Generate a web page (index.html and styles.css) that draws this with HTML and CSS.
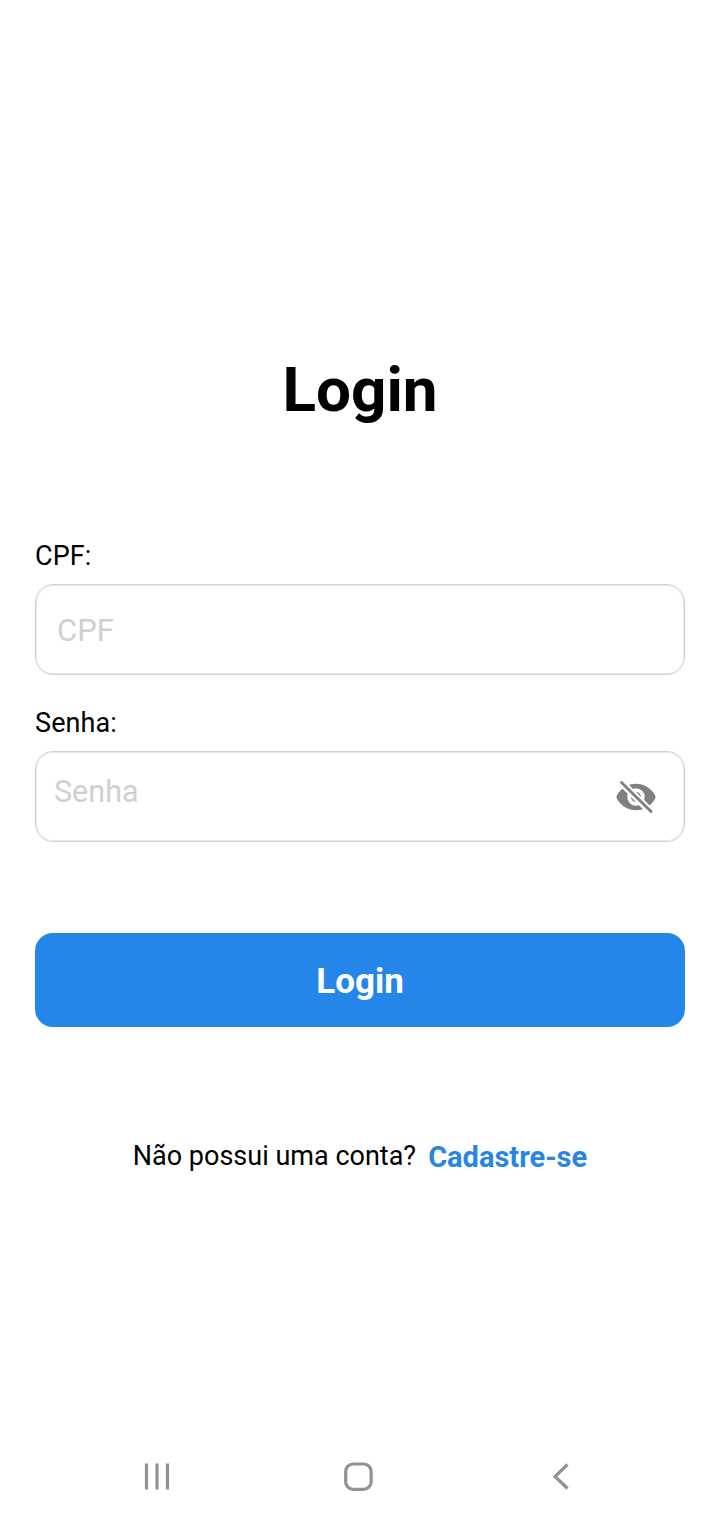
FILE: index.html
```html
<!DOCTYPE html>
<html lang="pt-BR">
<head>
<meta charset="utf-8">
<title>Login</title>
<link rel="stylesheet" href="styles.css">
</head>
<body>
<main class="screen">
  <h1 class="title">Login</h1>
  <form class="form">
    <label class="label" for="cpf">CPF:</label>
    <div class="field field-cpf"><input id="cpf" class="input" type="text" placeholder="CPF"></div>
    <label class="label" for="senha">Senha:</label>
    <div class="field field-senha">
      <input id="senha" class="input" type="password" placeholder="Senha">
      <svg class="eye" viewBox="0 0 40 32" width="40" height="32">
        <path fill="#808080" d="M.8 14.400C5 7 12 2.700 20 2.700S35 7 39.200 14.400Q40 16 39.200 17.600C35 25 28 29.300 20 29.300S5 25 .8 17.600Q0 16 .8 14.400z"/>
        <circle cx="20" cy="16" r="6.900" fill="none" stroke="#fff" stroke-width="3.600"/>
        <path d="M3 -1L37 33" stroke="#fff" stroke-width="7.400"/>
        <path d="M5.500 1.500L35 30.500" stroke="#808080" stroke-width="2.900" stroke-linecap="round"/>
      </svg>
    </div>
    <button class="button" type="button">Login</button>
  </form>
  <p class="signup"><span class="question">Não possui uma conta?</span><a class="link">Cadastre-se</a></p>
  <nav class="navbar">
    <svg class="recent" width="28" height="28" viewBox="0 0 28 28"><path d="M3.500 .5v26M14 .5v26M24.500 .5v26" stroke="#929292" stroke-width="3.200"/></svg>
    <svg class="home" width="30" height="30" viewBox="0 0 30 30"><rect x="2.700" y="2" width="25.400" height="25.400" rx="7.500" fill="none" stroke="#929292" stroke-width="3.200"/></svg>
    <svg class="back" width="18" height="28" viewBox="0 0 18 28"><path d="M15.500 1.500L3 13.500l12.500 12" fill="none" stroke="#929292" stroke-width="3.200"/></svg>
  </nav>
</main>
</body>
</html>
```
FILE: styles.css
```css
* { box-sizing: border-box; }
body { margin: 0; background: #fff; color: #000; font-family: Roboto, sans-serif; }
.screen { width: 720px; height: 1520px; padding: 352px 35px 0; display: flex; flex-direction: column; }
.title { margin: 0; height: 76px; font-size: 62px; line-height: 75px; font-weight: 700; text-align: center; }
.form { margin-top: 112px; display: flex; flex-direction: column; }
.label { height: 32px; margin-bottom: 12px; font-size: 27px; line-height: 32px; letter-spacing: .1px; }
.field { height: 91px; margin-bottom: 32px; border: 1px solid #d2d2d2; box-shadow: inset 0 0 0 1px #e9e9e9; border-radius: 18px; display: flex; align-items: center; }
.field-cpf { padding-left: 21px; }
.field-senha { padding: 0 28px 0 18px; }
.input { flex: 1; min-width: 0; padding: 0; border: 0; outline: 0; background: transparent; font: 400 31px/38px Roboto, sans-serif; }
.input::placeholder { color: #d0d0d0; opacity: 1; }
.field-cpf .input { margin-top: 2px; }
.field-senha .input { margin-bottom: 10px; font-size: 30.500px; }
.eye { overflow: visible; }
.button { margin-top: 59px; height: 94px; padding: 4px 0 0; border: 0; border-radius: 18px; background: #2586e9; color: #fff; font: 700 35px/42px Roboto, sans-serif; }
.signup { margin: 112px 0 0; height: 36px; display: flex; justify-content: center; gap: 12px; }
.question { font-size: 27px; line-height: 34px; }
.link { font-size: 29px; line-height: 36px; font-weight: 700; color: #2885e2; }
.navbar { margin: auto 115px 28px 108px; height: 30px; display: flex; align-items: center; }
.home { margin-left: 172px; }
.back { margin-left: 179px; }
```
